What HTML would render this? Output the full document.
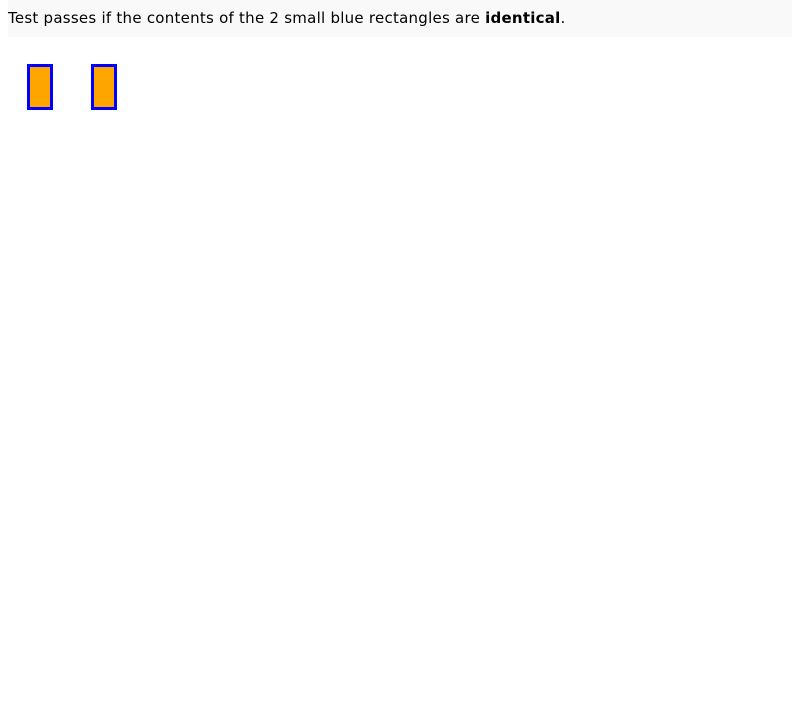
<!DOCTYPE html>
<html><head><style>
body{margin:0;background:#fff;font-family:"DejaVu Sans",sans-serif;}
.h{position:absolute;left:8px;top:0;width:784px;height:37px;background:#f9f9f9;font-size:15px;letter-spacing:0.25px;line-height:37px;color:#000;}
.r{position:absolute;top:64px;width:20px;height:40px;border:3px solid #00f;background:#ffa500;}
</style></head><body>
<div class="h">Test passes if the contents of the 2 small blue rectangles are <b>identical</b>.</div>
<div class="r" style="left:27px"></div>
<div class="r" style="left:91px"></div>
</body></html>
